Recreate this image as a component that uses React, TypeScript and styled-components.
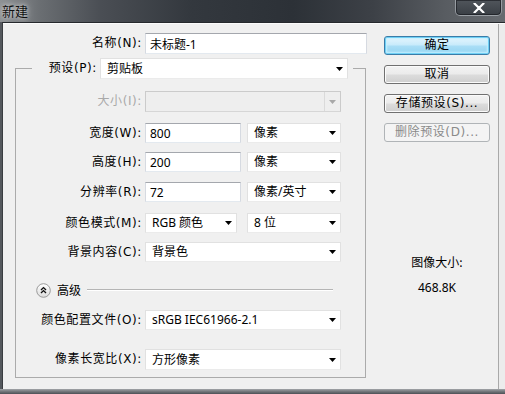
import React from "react";
import styled, { createGlobalStyle } from "styled-components";

const GlobalStyle = createGlobalStyle`
  html, body { margin: 0; padding: 0; background: #5b5f64; }
  body { width: 505px; height: 394px; overflow: hidden; font-family: "Noto Sans", "Noto Sans CJK SC", sans-serif; }
  * { box-sizing: border-box; }
`;

const Window = styled.div`
  width: 505px;
  height: 394px;
  display: flex;
  flex-direction: column;
  background: #54585d;
`;

const TitleBar = styled.div`
  height: 22px;
  flex: none;
  display: flex;
  align-items: flex-start;
  justify-content: space-between;
  background: linear-gradient(90deg, #8e9194 0%, #6a6e72 8%, #4a4e54 20%, #33383e 38%, #2c3137 58%, #3d4147 74%, #585c61 88%, #676b70 100%);
`;

const Title = styled.div`
  padding: 3px 0 0 2px;
  font-family: "Noto Sans CJK SC", sans-serif;
  font-size: 13px;
  line-height: 16px;
  color: #101010;
  text-shadow: 0 0 4px rgba(255, 255, 255, 0.75), 0 0 8px rgba(255, 255, 255, 0.45);
`;

const CloseButton = styled.div`
  width: 47px;
  height: 16px;
  margin-right: 3px;
  display: flex;
  align-items: center;
  justify-content: center;
  border: 1px solid rgba(215, 220, 226, 0.55);
  border-top: none;
  border-radius: 0 0 5px 5px;
  background: linear-gradient(#50555b, #3a3f45);
  box-shadow: inset 0 0 0 1px rgba(20, 22, 26, 0.6);
`;

const Client = styled.div`
  flex: 1;
  margin-left: 2px;
  display: flex;
  border-top: 1px solid #26292d;
  border-left: 1px solid #3a3d41;
  background: #f0f0f0;
  box-shadow: inset 0 1px 0 #fbfbfb, inset -6px 0 0 #ececec, inset -7px 0 0 #a9a9a9;
`;

const BottomFrame = styled.div`
  height: 5px;
  flex: none;
  background: linear-gradient(#a3a6a9, #7b7f83 40%, #4c5055);
`;

const MainColumn = styled.div`
  width: 364px;
  padding-top: 10px;
  display: flex;
  flex-direction: column;
`;

const SideColumn = styled.div`
  width: 106px;
  margin-left: 17px;
  padding-top: 13px;
  display: flex;
  flex-direction: column;
  gap: 10px;
`;

const Label = styled.div<{ $disabled?: boolean; $h?: number }>`
  text-align: right;
  font-family: "DejaVu Sans", "Noto Sans CJK SC", sans-serif;
  font-size: 12px;
  letter-spacing: 0.6px;
  line-height: ${(p) => p.$h ?? 21}px;
  color: ${(p) => (p.$disabled ? "#a9a9a9" : "#000")};
  white-space: nowrap;
`;

const NameRow = styled.div`
  display: grid;
  grid-template-columns: 139px 222px;
  column-gap: 3px;
  height: 21px;
`;

const TextInput = styled.input<{ $w?: number; $h?: number }>`
  width: ${(p) => (p.$w ? `${p.$w}px` : "100%")};
  height: ${(p) => p.$h ?? 21}px;
  margin: 0;
  padding: 0 4px;
  border: 1px solid;
  border-color: #a4a7ad #d6dae1 #e3e9ef #d6dae1;
  background: #fff;
  font-family: "Noto Sans", "Noto Sans CJK SC", sans-serif;
  font-size: 12px;
  color: #000;
  outline: none;
`;

const Combo = styled.div<{ $w?: number; $h?: number; $disabled?: boolean }>`
  width: ${(p) => (p.$w ? `${p.$w}px` : "100%")};
  height: ${(p) => p.$h ?? 20}px;
  display: flex;
  align-items: center;
  justify-content: space-between;
  padding: 0 4px 0 6px;
  border: 1px solid ${(p) => (p.$disabled ? "#cbcbcb" : "#e1e1e1")};
  border-bottom-color: ${(p) => (p.$disabled ? "#d6d6d6" : "#ebebeb")};
  background: ${(p) => (p.$disabled ? "#eeeeee" : "#ffffff")};
  font-family: "Noto Sans", "Noto Sans CJK SC", sans-serif;
  font-size: 12px;
  color: #000;
  white-space: nowrap;
`;

const ComboText = styled.span`
  line-height: 16px;
`;

const DropZone = styled.div`
  height: 100%;
  width: 16px;
  margin-right: -4px;
  display: flex;
  align-items: center;
  justify-content: center;
  border-left: 1px solid #dadada;
`;

const GroupBox = styled.fieldset`
  width: 351px;
  min-width: 0;
  margin: 4px 0 0 12px;
  padding: 0 0 7px 0;
  border: 1px solid #ababab;
`;

const Legend = styled.legend`
  margin-left: 16px;
  padding: 0 5px 0 13px;
`;

const LegendInner = styled.div`
  display: flex;
  align-items: center;
  gap: 3px;
  height: 21px;
`;

const Row = styled.div<{ $mt: number; $h?: number }>`
  display: grid;
  grid-template-columns: 126px 196px;
  column-gap: 3px;
  margin-top: ${(p) => p.$mt}px;
  height: ${(p) => p.$h ?? 20}px;
`;

const Pair = styled.div`
  display: flex;
  justify-content: space-between;
`;

const AdvancedRow = styled.div`
  display: flex;
  align-items: center;
  height: 16px;
  margin-top: 20px;
  padding-left: 20px;
`;

const AdvancedText = styled.span`
  margin-left: 6px;
  font-family: "Noto Sans CJK SC", sans-serif;
  font-size: 12px;
  line-height: 16px;
  color: #000;
`;

const Rule = styled.div`
  flex: 1;
  height: 2px;
  margin: 0 32px 0 6px;
  border-top: 1px solid #b5b5b5;
  border-bottom: 1px solid #ffffff;
`;

const Button = styled.div<{ $variant?: "default" | "normal" | "disabled" }>`
  height: 19px;
  display: flex;
  align-items: center;
  justify-content: center;
  border-radius: 3px;
  font-family: "DejaVu Sans", "Noto Sans CJK SC", sans-serif;
  font-size: 12px;
  letter-spacing: 0.6px;
  line-height: 17px;
  white-space: nowrap;
  border: 1px solid
    ${(p) => (p.$variant === "default" ? "#3a7ca8" : p.$variant === "disabled" ? "#b0b4b7" : "#707070")};
  color: ${(p) => (p.$variant === "disabled" ? "#8a8a8a" : "#000")};
  background: ${(p) =>
    p.$variant === "default"
      ? "linear-gradient(#e8f6fd 0%, #c9ebfb 45%, #a9def6 55%, #93d3f1 100%)"
      : p.$variant === "disabled"
      ? "#f4f4f4"
      : "linear-gradient(#f3f3f3 0%, #ebebeb 48%, #dcdcdc 52%, #cfcfcf 100%)"};
  box-shadow: ${(p) =>
    p.$variant === "default"
      ? "inset 0 0 0 1px #6fd0f5, inset 0 0 2px 2px #c5f0ff"
      : p.$variant === "disabled"
      ? "none"
      : "inset 0 0 0 1px #fbfbfb"};
`;

const InfoTitle = styled.div`
  margin-top: 102px;
  text-align: center;
  font-family: "Noto Sans CJK SC", sans-serif;
  font-size: 12px;
  line-height: 16px;
  color: #000;
`;

const InfoValue = styled.div`
  text-align: center;
  font-family: "Noto Sans", sans-serif;
  font-size: 12px;
  line-height: 16px;
  color: #000;
`;

const Arrow = ({ color = "#000" }: { color?: string }) => (
  <svg width="7" height="4" viewBox="0 0 7 4">
    <path d="M0 0 H7 L3.5 4 Z" fill={color} />
  </svg>
);

const CloseIcon = () => (
  <svg width="12" height="10" viewBox="0 0 12 10">
    <path d="M1.5 0.5 L10.5 9.5 M10.5 0.5 L1.5 9.5" stroke="#fff" strokeWidth="2.2" strokeLinecap="round" />
  </svg>
);

const CollapseIcon = () => (
  <svg width="15" height="15" viewBox="0 0 15 15">
    <defs>
      <linearGradient id="cg" x1="0" y1="0" x2="0" y2="1">
        <stop offset="0" stopColor="#ffffff" />
        <stop offset="1" stopColor="#dcdcdc" />
      </linearGradient>
    </defs>
    <circle cx="7.5" cy="7.5" r="6.8" fill="url(#cg)" stroke="#9a9a9a" strokeWidth="1" />
    <path d="M5 7 L7.5 4.6 L10 7 M5 10 L7.5 7.6 L10 10" fill="none" stroke="#111" strokeWidth="1.4" />
  </svg>
);

const ComboBox = ({ text, w, h }: { text: string; w?: number; h?: number }) => (
  <Combo $w={w} $h={h}>
    <ComboText>{text}</ComboText>
    <Arrow />
  </Combo>
);

export default function App() {
  return (
    <>
      <GlobalStyle />
      <Window>
        <TitleBar>
          <Title>新建</Title>
          <CloseButton>
            <CloseIcon />
          </CloseButton>
        </TitleBar>
        <Client>
          <MainColumn>
            <NameRow>
              <Label>名称(N):</Label>
              <TextInput readOnly value="未标题-1" />
            </NameRow>
            <GroupBox>
              <Legend>
                <LegendInner>
                  <Label style={{ width: 52 }}>预设(P):</Label>
                  <ComboBox text="剪贴板" w={248} h={21} />
                </LegendInner>
              </Legend>
              <Row $mt={12} $h={21}>
                <Label $disabled>大小(I):</Label>
                <Combo $disabled $h={21}>
                  <ComboText />
                  <DropZone>
                    <Arrow color="#a8a8a8" />
                  </DropZone>
                </Combo>
              </Row>
              <Row $mt={11}>
                <Label $h={20}>宽度(W):</Label>
                <Pair>
                  <TextInput readOnly value="800" $w={96} $h={20} />
                  <ComboBox text="像素" w={94} />
                </Pair>
              </Row>
              <Row $mt={9}>
                <Label $h={20}>高度(H):</Label>
                <Pair>
                  <TextInput readOnly value="200" $w={96} $h={20} />
                  <ComboBox text="像素" w={94} />
                </Pair>
              </Row>
              <Row $mt={10}>
                <Label $h={20}>分辨率(R):</Label>
                <Pair>
                  <TextInput readOnly value="72" $w={96} $h={20} />
                  <ComboBox text="像素/英寸" w={94} />
                </Pair>
              </Row>
              <Row $mt={11}>
                <Label $h={20}>颜色模式(M):</Label>
                <Pair>
                  <ComboBox text="RGB 颜色" w={92} />
                  <ComboBox text="8 位" w={94} />
                </Pair>
              </Row>
              <Row $mt={9}>
                <Label $h={20}>背景内容(C):</Label>
                <ComboBox text="背景色" />
              </Row>
              <AdvancedRow>
                <CollapseIcon />
                <AdvancedText>高级</AdvancedText>
                <Rule />
              </AdvancedRow>
              <Row $mt={12}>
                <Label $h={20}>颜色配置文件(O):</Label>
                <ComboBox text="sRGB IEC61966-2.1" />
              </Row>
              <Row $mt={19} $h={21}>
                <Label>像素长宽比(X):</Label>
                <ComboBox text="方形像素" h={21} />
              </Row>
            </GroupBox>
          </MainColumn>
          <SideColumn>
            <Button $variant="default">确定</Button>
            <Button>取消</Button>
            <Button>存储预设(S)...</Button>
            <Button $variant="disabled">删除预设(D)...</Button>
            <InfoTitle>图像大小:</InfoTitle>
            <InfoValue>468.8K</InfoValue>
          </SideColumn>
        </Client>
        <BottomFrame />
      </Window>
    </>
  );
}
